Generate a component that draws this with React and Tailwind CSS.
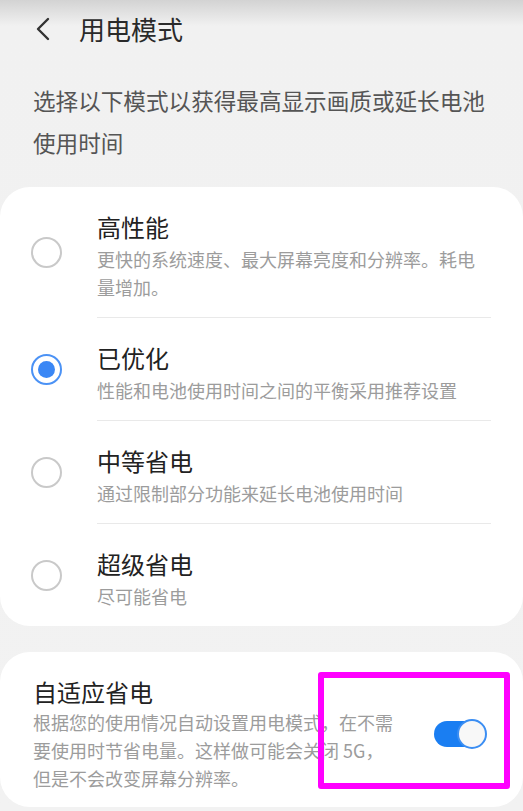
import React from "react";

const font = { fontFamily: '"Noto Sans CJK SC", "Noto Sans", sans-serif' };

function Radio({ checked }) {
  if (checked) {
    return (
      <div className="w-[31px] h-[31px] rounded-full border-2 border-[#4b92f5] flex items-center justify-center shrink-0">
        <div className="w-[17px] h-[17px] rounded-full bg-[#3a87f5]" />
      </div>
    );
  }
  return <div className="w-[31px] h-[31px] rounded-full border-2 border-[#c9c9c9] shrink-0" />;
}

function Row({ title, lines, checked, divider }) {
  return (
    <div className="flex items-center">
      <div className="w-[97px] pl-[31px] flex items-center shrink-0">
        <Radio checked={checked} />
      </div>
      <div className={"flex-1 mr-[32px] pt-[24px] pb-[16px] " + (divider ? "border-b border-[#e9e9e9]" : "")}>
        <div className="text-[24px] leading-[32px] text-[#222222]">{title}</div>
        <div className="mt-[2px] text-[18px] leading-[28px] text-[#9c9c9c]">
          {lines.map((l, i) => (
            <div key={i}>{l}</div>
          ))}
        </div>
      </div>
    </div>
  );
}

export default function App() {
  return (
    <div
      className="relative w-[523px] h-[811px] overflow-hidden bg-[linear-gradient(to_bottom,#d3d3d3_0px,#f1f1f1_26px,#f2f2f2_100%)]"
      style={font}
    >
      <div className="flex items-center h-[57px] pl-[35px]">
        <svg width="16" height="24" viewBox="0 0 16 24" className="shrink-0">
          <path d="M13 2 L3 12 L13 22" fill="none" stroke="#333333" strokeWidth="2.4" strokeLinecap="round" strokeLinejoin="round" />
        </svg>
        <div className="ml-[28px] text-[26px] leading-[34px] text-[#2a2a2a]">用电模式</div>
      </div>

      <div className="mt-[23px] pl-[33px] text-[22.6px] leading-[42px] text-[#555555]">
        <div>选择以下模式以获得最高显示画质或延长电池</div>
        <div>使用时间</div>
      </div>

      <div className="mt-[23px] bg-white rounded-[30px]">
        <Row title="高性能" lines={["更快的系统速度、最大屏幕亮度和分辨率。耗电", "量增加。"]} divider />
        <Row title="已优化" lines={["性能和电池使用时间之间的平衡采用推荐设置"]} checked divider />
        <Row title="中等省电" lines={["通过限制部分功能来延长电池使用时间"]} divider />
        <Row title="超级省电" lines={["尽可能省电"]} />
      </div>

      <div className="mt-[26px] bg-white rounded-[30px] flex items-center pl-[33px] pr-[36px] pt-[24px] pb-[15px]">
        <div className="flex-1">
          <div className="text-[24px] leading-[32px] text-[#222222]">自适应省电</div>
          <div className="text-[18px] leading-[28px] text-[#9c9c9c]">
            <div>根据您的使用情况自动设置用电模式，在不需</div>
            <div>要使用时节省电量。这样做可能会关闭 5G，</div>
            <div>但是不会改变屏幕分辨率。</div>
          </div>
        </div>
        <div className="relative w-[53px] h-[30px] shrink-0">
          <div className="absolute left-0 right-[4px] top-[2px] bottom-[2px] rounded-full bg-[#1a7ef2]" />
          <div className="absolute right-0 top-0 w-[30px] h-[30px] rounded-full bg-[#f8f8f8] border-2 border-[#3b8ef3]" />
        </div>
      </div>

      <div className="absolute left-[318px] top-[672px] w-[192px] h-[117px] border-[6px] border-[#ff00ff] rounded-[3px]" />
    </div>
  );
}
